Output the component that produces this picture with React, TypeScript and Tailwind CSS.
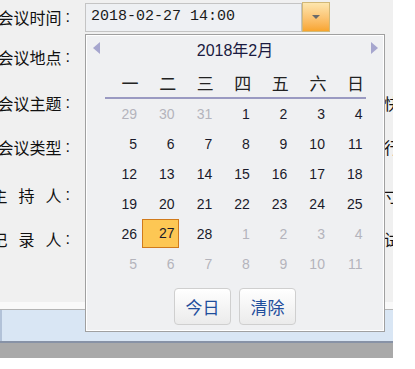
const cjk = "font-['Noto_Sans_CJK_SC',sans-serif]";
const num = "font-['Liberation_Sans','Noto_Sans_CJK_SC',sans-serif]";

const weekdays = ["一", "二", "三", "四", "五", "六", "日"];

// 6 weeks shown, leading/trailing days from the neighbour months are muted
const days: { d: number; cur: boolean }[] = [
    ...[29, 30, 31].map((d) => ({ d, cur: false })),
    ...Array.from({ length: 28 }, (_, i) => ({ d: i + 1, cur: true })),
    ...Array.from({ length: 11 }, (_, i) => ({ d: i + 1, cur: false })),
];

function LabelRow({ children, mt, tail }: { children: React.ReactNode; mt: string; tail?: string }) {
    return (
        <div className={`flex items-center h-[20px] ${mt}`}>
            <div className={`w-[70px] shrink-0 flex justify-end whitespace-nowrap text-[16px] leading-[20px] text-[#111] ${cjk}`}>
                {children}
                <span className="ml-[4px] font-['Liberation_Sans',sans-serif]">:</span>
            </div>
            {tail && <span className={`ml-auto mr-[-7px] text-[16px] leading-[20px] text-[#111] ${cjk}`}>{tail}</span>}
        </div>
    );
}

export default function App() {
    return (
        <div className="w-[415px] h-[369px] bg-white">
            <div className="relative w-[393px] h-[358px] overflow-hidden flex flex-col">
                {/* form area */}
                <div className="h-[302px] bg-[#f0f0f0] flex flex-col">
                    <div className="flex items-center h-[30px] mt-[2px]">
                        <div className={`w-[70px] shrink-0 flex justify-end whitespace-nowrap text-[16px] leading-[20px] text-[#111] ${cjk}`}>
                            会议时间
                            <span className="ml-[4px] font-['Liberation_Sans',sans-serif]">:</span>
                        </div>
                        <div className="ml-[15px] w-[217px] h-[29px] border border-[#c4c4c4] bg-[#eef0f3] flex items-center pl-[5px]">
                            <span className="font-['Liberation_Mono',monospace] text-[15px] text-[#1a1a1a]">2018-02-27 14:00</span>
                        </div>
                        <div className="w-[28px] h-[30px] border border-[#d2b877] bg-gradient-to-b from-[#fde6ae] to-[#f8a52c] flex items-center justify-center">
                            <div className="w-0 h-0 border-x-[4px] border-x-transparent border-t-[4px] border-t-[#6a6a6a]" />
                        </div>
                    </div>
                    <LabelRow mt="mt-[15px]">会议地点</LabelRow>
                    <LabelRow mt="mt-[26px]" tail="快">会议主题</LabelRow>
                    <LabelRow mt="mt-[24px]" tail="行">会议类型</LabelRow>
                    <LabelRow mt="mt-[28px]" tail="寸">
                        <span className="tracking-[11px]">主持</span>人
                    </LabelRow>
                    <LabelRow mt="mt-[24px]" tail="试">
                        <span className="tracking-[11px]">记录</span>人
                    </LabelRow>
                </div>

                {/* bottom bars */}
                <div className="h-[8px] bg-[#f9f9f9] border-b border-[#b4b4b4]" />
                <div className="h-[31px] bg-[#d9e6f4] border-l-2 border-[#b2c2d8]" />
                <div className="h-[2px] bg-[#8792a6]" />
                <div className="flex-1 bg-[#a9a9a9]" />

                {/* date picker popup */}
                <div className="absolute left-[85px] top-[34px] w-[300px] h-[298px] border border-[#a0a0a0] bg-[#eff0f2] shadow-[inset_0_0_0_1px_#ffffff] flex flex-col">
                    <div className="relative h-[31px] flex items-center justify-center">
                        <div className="absolute left-[7px] top-[7px] w-0 h-0 border-y-[6px] border-y-transparent border-r-[7px] border-r-[#a6a6ce]" />
                        <span className={`text-[16px] text-[#1a1a40] ${num}`}>2018年2月</span>
                        <div className="absolute right-[6px] top-[7px] w-0 h-0 border-y-[6px] border-y-transparent border-l-[7px] border-l-[#a6a6ce]" />
                    </div>
                    <div className="mt-[3px] ml-[18px] w-[263px] h-[28px] grid grid-cols-7">
                        {weekdays.map((w) => (
                            <div key={w} className={`flex items-center justify-end pr-[3px] text-[17px] text-[#222] ${cjk}`}>
                                {w}
                            </div>
                        ))}
                    </div>
                    <div className="ml-[19px] w-[261px] h-[2px] bg-[#9a9ac2]" />
                    <div className="ml-[18px] w-[263px] grid grid-cols-7">
                        {days.map((x, i) =>
                            x.cur && x.d === 27 ? (
                                <div key={i} className="h-[30px]">
                                    <div className={`h-[29px] border border-[#d07a1c] bg-[#fdc754] flex items-center justify-end pr-[3.5px] text-[14px] text-[#1a1a2a] ${num}`}>
                                        {x.d}
                                    </div>
                                </div>
                            ) : (
                                <div
                                    key={i}
                                    className={`h-[30px] flex items-center justify-end pr-[4.5px] text-[14px] ${num} ${x.cur ? "text-[#1a1a2a]" : "text-[#b4b4bc]"}`}
                                >
                                    {x.d}
                                </div>
                            )
                        )}
                    </div>
                    <div className="mt-[9px] flex justify-center gap-[8px]">
                        {["今日", "清除"].map((b) => (
                            <button
                                key={b}
                                className={`w-[57px] h-[37px] rounded-[4px] border border-[#cfcfcf] bg-gradient-to-b from-white to-[#ebebeb] text-[17px] text-[#1f4e9c] ${cjk}`}
                            >
                                {b}
                            </button>
                        ))}
                    </div>
                </div>
            </div>
        </div>
    );
}
